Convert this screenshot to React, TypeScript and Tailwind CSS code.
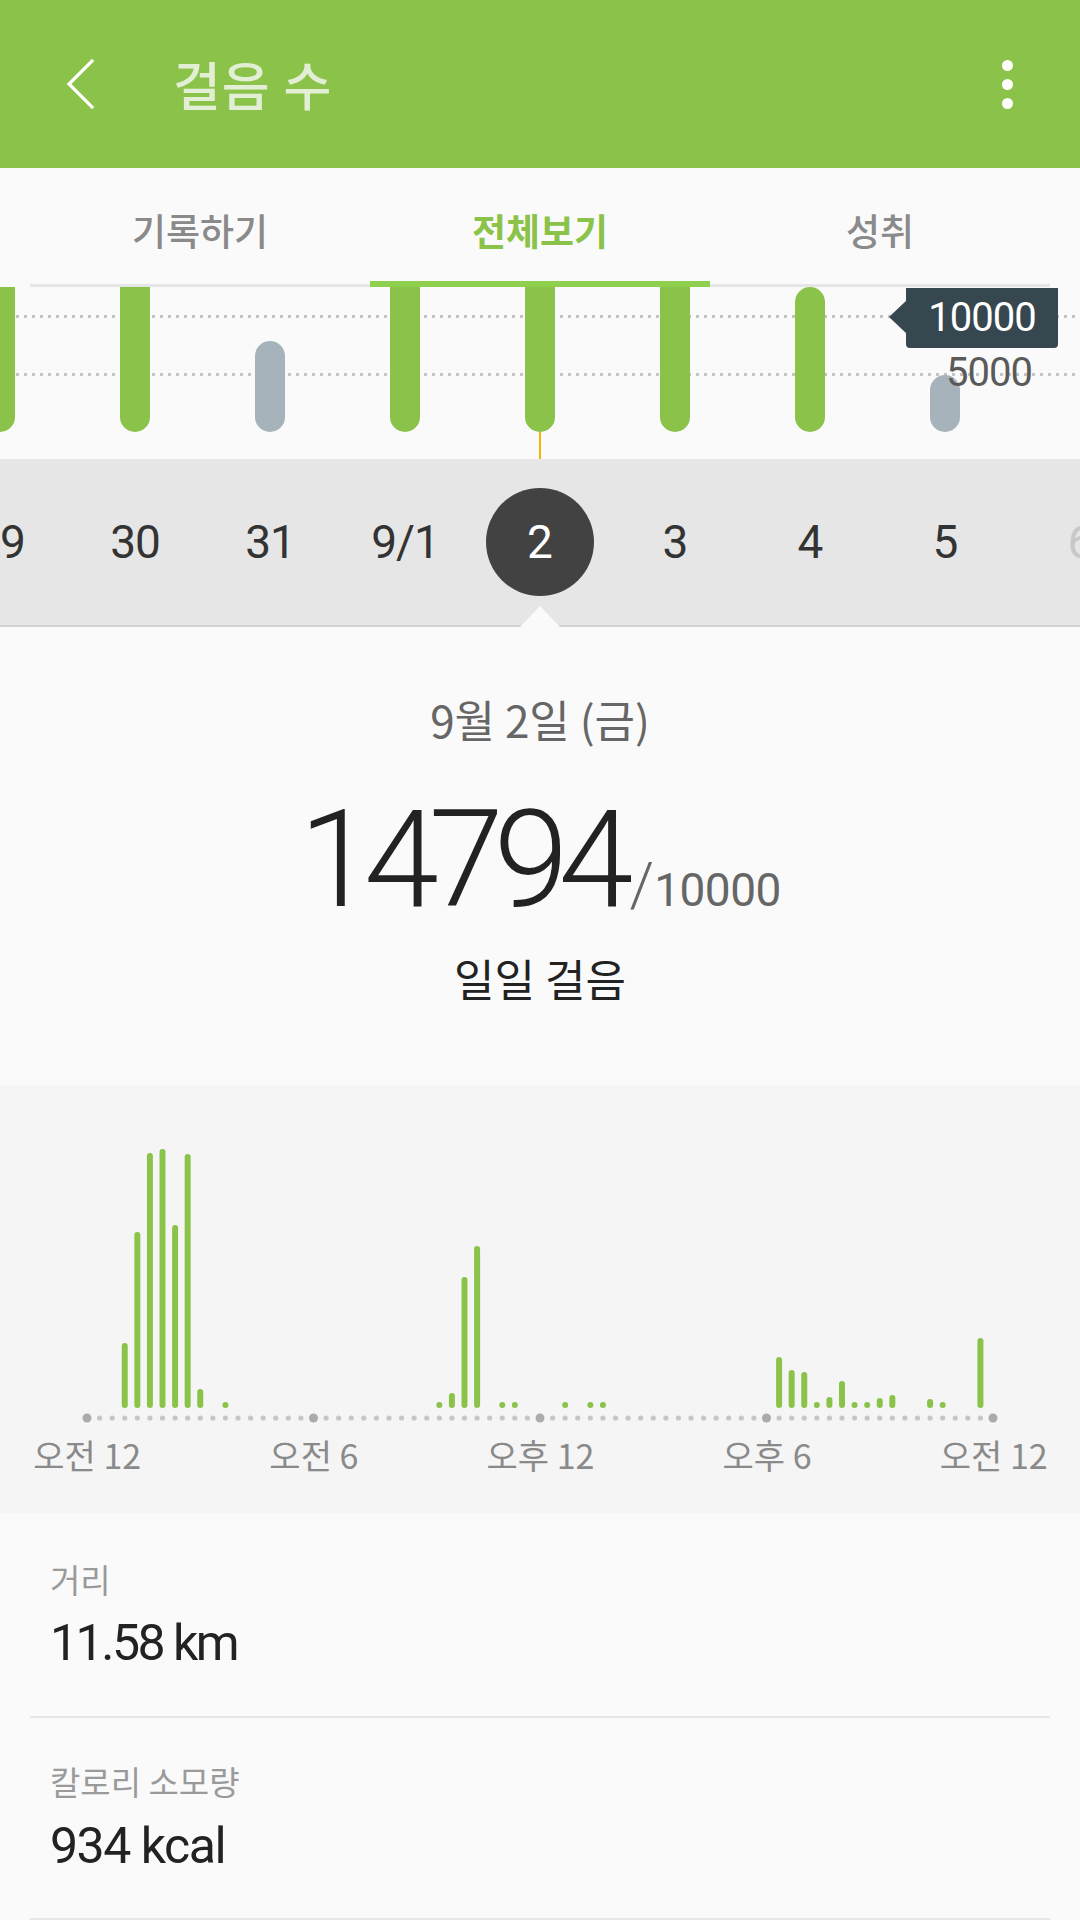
import React from 'react';

const KR = "font-['Noto_Sans_CJK_KR','Noto_Sans',sans-serif]";
const NUM = "font-['Roboto','Noto_Sans',sans-serif]";

type Week = { d: string; bar: 'full' | 'round' | 'gray91' | 'gray57' | 'none'; sel?: boolean; faded?: boolean };

const week: Week[] = [
  { d: '29', bar: 'full' },
  { d: '30', bar: 'full' },
  { d: '31', bar: 'gray91' },
  { d: '9/1', bar: 'full' },
  { d: '2', bar: 'full', sel: true },
  { d: '3', bar: 'full' },
  { d: '4', bar: 'round' },
  { d: '5', bar: 'gray57' },
  { d: '6', bar: 'none', faded: true },
];

const hourly: { i: number; h: number }[] = [
  { i: 3, h: 65 }, { i: 4, h: 176 }, { i: 5, h: 255 }, { i: 6, h: 259 }, { i: 7, h: 183 },
  { i: 8, h: 254 }, { i: 9, h: 19 }, { i: 11, h: 0 }, { i: 28, h: 0 }, { i: 29, h: 15 },
  { i: 30, h: 131 }, { i: 31, h: 162 }, { i: 33, h: 0 }, { i: 34, h: 0 }, { i: 38, h: 0 },
  { i: 40, h: 0 }, { i: 41, h: 0 }, { i: 55, h: 51 }, { i: 56, h: 38 }, { i: 57, h: 36 },
  { i: 58, h: 0 }, { i: 59, h: 11 }, { i: 60, h: 27 }, { i: 61, h: 0 }, { i: 62, h: 0 },
  { i: 63, h: 10 }, { i: 64, h: 13 }, { i: 67, h: 9 }, { i: 68, h: 0 }, { i: 71, h: 70 },
];

const x0 = 87;
const step = 906 / 72;

function Bar({ kind }: { kind: Week['bar'] }) {
  if (kind === 'full') return <div className="w-[30px] h-[145px] bg-[#8bc34a] rounded-b-full" />;
  if (kind === 'round') return <div className="w-[30px] h-[145px] bg-[#8bc34a] rounded-full" />;
  if (kind === 'gray91') return <div className="w-[30px] h-[91px] bg-[#a6b3ba] rounded-full" />;
  if (kind === 'gray57') return <div className="w-[30px] h-[57px] bg-[#a6b3ba] rounded-full" />;
  return null;
}

function HourlyChart() {
  const dots = Array.from({ length: 73 }, (_, k) => k);
  return (
    <svg width="1080" height="340" viewBox="0 0 1080 340" className="block">
      {dots.map((k) => {
        const big = k % 18 === 0;
        return (
          <circle
            key={k}
            cx={x0 + k * step}
            cy={333}
            r={big ? 4.5 : 2.6}
            fill={big ? '#ababab' : '#c6c6c6'}
          />
        );
      })}
      {hourly.map(({ i, h }) => {
        const cx = x0 + i * step;
        if (h === 0) return <circle key={i} cx={cx} cy={320} r={3} fill="#8bc34a" />;
        return <rect key={i} x={cx - 3} y={323 - h} width={6} height={h} rx={3} fill="#8bc34a" />;
      })}
    </svg>
  );
}

export default function App() {
  return (
    <div className="w-[1080px] h-[1920px] overflow-hidden bg-[#fafafa] flex flex-col">
      {/* Header */}
      <div className="h-[168px] shrink-0 bg-[#8bc34a] flex items-center">
        <div className="pl-[63px] mr-[78px] flex items-center">
          <svg width="32" height="52" viewBox="0 0 32 52">
            <path d="M29 3 L6 26 L29 49" fill="none" stroke="#ffffff" strokeWidth="3.2" strokeLinecap="square" />
          </svg>
        </div>
        <div className={`${KR} flex-1 text-[52px] leading-none text-[#e2efd4] font-medium tracking-[1px]`}>걸음 수</div>
        <div className="pr-[67px] flex flex-col items-center gap-[8px]">
          <div className="w-[11px] h-[11px] rounded-full bg-white" />
          <div className="w-[11px] h-[11px] rounded-full bg-white" />
          <div className="w-[11px] h-[11px] rounded-full bg-white" />
        </div>
      </div>

      {/* Tabs */}
      <div className="shrink-0 px-[30px] flex">
        <div className="flex-1 flex flex-col">
          <div className={`${KR} h-[113px] pt-[12px] flex items-center justify-center text-[37px] leading-none font-medium text-[#8a8a8a]`}>기록하기</div>
          <div className="mt-[3px] h-[3px] bg-[#e6e6e6]" />
        </div>
        <div className="flex-1 flex flex-col">
          <div className={`${KR} h-[113px] pt-[12px] flex items-center justify-center text-[37px] leading-none font-bold text-[#8bc34a]`}>전체보기</div>
          <div className="h-[6px] bg-[#8fd14f]" />
        </div>
        <div className="flex-1 flex flex-col">
          <div className={`${KR} h-[113px] pt-[12px] flex items-center justify-center text-[37px] leading-none font-medium text-[#8a8a8a]`}>성취</div>
          <div className="mt-[3px] h-[3px] bg-[#e6e6e6]" />
        </div>
      </div>

      {/* Weekly bars */}
      <div className="relative shrink-0 h-[172px] overflow-hidden">
        <div className="absolute left-0 right-0 top-[28px] h-[3px] bg-[linear-gradient(to_right,#c4c4c4_3px,transparent_3px)] bg-[length:8px_3px] bg-repeat-x" />
        <div className="absolute left-0 right-0 top-[86px] h-[3px] bg-[linear-gradient(to_right,#c4c4c4_3px,transparent_3px)] bg-[length:8px_3px] bg-repeat-x" />
        <div className="relative flex ml-[-67.5px] w-[1215px]">
          {week.map((w) => (
            <div key={w.d} className="w-[135px] shrink-0 flex flex-col items-center">
              <div className="h-[145px] flex flex-col justify-end items-center">
                <Bar kind={w.bar} />
              </div>
              <div className="h-[27px] flex justify-center">
                {w.sel ? <div className="w-[2px] h-full bg-[#f2b705]" /> : null}
              </div>
            </div>
          ))}
        </div>
        <div className="absolute right-[22px] top-[1px] w-[152px] h-[60px] bg-[#37474f] rounded-b-[4px] flex items-center justify-center">
          <div className="absolute left-[-17px] top-[12px] w-[18px] h-[34px] bg-[#37474f] [clip-path:polygon(100%_0,0_50%,100%_100%)]" />
          <span className={`${NUM} text-[40px] leading-none text-white tracking-[-1px]`}>10000</span>
        </div>
        <div className={`absolute right-[48px] top-[66px] ${NUM} text-[40px] leading-none text-[#5a5a5a] tracking-[-1px]`}>5000</div>
      </div>

      {/* Date strip */}
      <div className="relative shrink-0 h-[168px] bg-[#e6e6e6] border-b-2 border-[#d2d2d2]">
        <div className="h-full overflow-hidden">
          <div className="flex ml-[-67.5px] w-[1215px] h-full">
            {week.map((w) => (
              <div key={w.d} className="w-[135px] shrink-0 flex items-center justify-center">
                {w.sel ? (
                  <div className="w-[108px] h-[108px] rounded-full bg-[#424242] flex items-center justify-center">
                    <span className={`${NUM} text-[46px] leading-none text-white`}>{w.d}</span>
                  </div>
                ) : (
                  <span className={`${NUM} text-[46px] leading-none tracking-[-1px] ${w.faded ? 'text-[#c8c8c8]' : 'text-[#333333]'}`}>{w.d}</span>
                )}
              </div>
            ))}
          </div>
        </div>
        <div className="absolute left-[520px] bottom-[-2px] w-[40px] h-[21px] bg-[#fafafa] [clip-path:polygon(50%_0,100%_100%,0_100%)]" />
      </div>

      {/* Summary */}
      <div className="shrink-0 h-[458px] flex flex-col items-center pt-[70px]">
        <div className={`${KR} text-[44px] leading-none text-[#666666]`}>9월 2일 (금)</div>
        <div className="mt-[52px] flex items-baseline">
          <span className={`${NUM} text-[135px] leading-none font-light text-[#222222] tracking-[-10px]`}>14794</span>
          <span className={`${NUM} text-[62px] leading-none font-light text-[#666666] ml-[6px]`}>/</span>
          <span className={`${NUM} text-[46px] leading-none text-[#666666] tracking-[-0.5px]`}>10000</span>
        </div>
        <div className={`${KR} mt-[28px] text-[44px] leading-none text-[#222222]`}>일일 걸음</div>
      </div>

      {/* Hourly chart */}
      <div className="shrink-0 h-[428px] bg-[#f5f5f5] flex flex-col">
        <HourlyChart />
        <div className="mt-[13px] ml-[-26px] w-[1133px] flex">
          {['오전 12', '오전 6', '오후 12', '오후 6', '오전 12'].map((t, k) => (
            <div key={k} className={`${KR} flex-1 text-center text-[34px] leading-none text-[#8a8a8a]`}>{t}</div>
          ))}
        </div>
      </div>

      {/* Stats list */}
      <div className="shrink-0 px-[30px] flex flex-col">
        <div className="h-[205px] border-b-2 border-[#e6e6e6] px-[20px] pt-[50px]">
          <div className={`${KR} text-[33px] leading-none text-[#9a9a9a]`}>거리</div>
          <div className={`${NUM} mt-[22px] text-[50px] leading-none text-[#222222] tracking-[-2.5px]`}>11.58 km</div>
        </div>
        <div className="h-[202px] border-b-2 border-[#e6e6e6] px-[20px] pt-[47px]">
          <div className={`${KR} text-[33px] leading-none text-[#9a9a9a]`}>칼로리 소모량</div>
          <div className={`${NUM} mt-[23px] text-[50px] leading-none text-[#222222] tracking-[-1.5px]`}>934 kcal</div>
        </div>
      </div>
    </div>
  );
}
